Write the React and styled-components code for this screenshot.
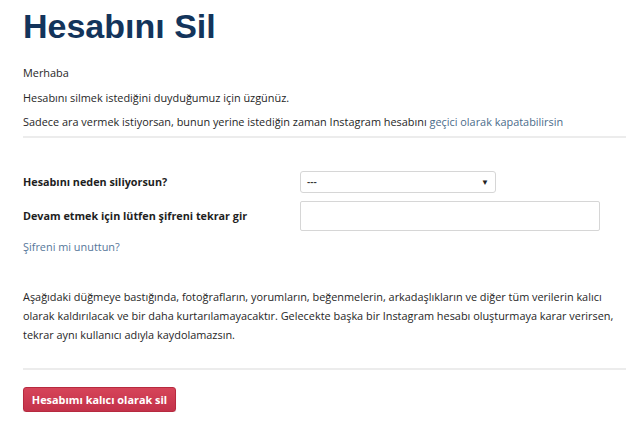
import React from "react";
import styled, { createGlobalStyle } from "styled-components";

const Global = createGlobalStyle`
  html, body { margin: 0; padding: 0; background: #fff; }
  body { font-family: "Open Sans", "Noto Sans", sans-serif; color: #262626; }
`;

const Page = styled.div`
  width: 603px;
  padding: 6px 0 0 23px;
`;

const Title = styled.h1`
  margin: 0;
  font-family: "Liberation Sans", Arial, sans-serif;
  font-weight: 700;
  font-size: 34px;
  line-height: 40px;
  color: #13345b;
`;

const Text = styled.p`
  margin: 0;
  font-size: 10.9px;
  line-height: 24.5px;
`;

const Intro = styled.div`
  padding-top: 15px;
  padding-bottom: 1px;
  border-bottom: 2px solid #ececec;
`;

const Link = styled.a`
  color: #4a6b8a;
  text-decoration: none;
`;

const Form = styled.div`
  padding-top: 33px;
  display: flex;
  flex-direction: column;
  gap: 8px;
`;

const Row = styled.div`
  display: grid;
  grid-template-columns: 277px 1fr;
  align-items: center;
`;

const Label = styled.label`
  font-size: 10.8px;
  font-weight: 700;
  color: #1e1e1e;
`;

const Select = styled.div`
  width: 196px;
  height: 22px;
  box-sizing: border-box;
  border: 1px solid #d6d6d6;
  border-radius: 3px;
  display: flex;
  align-items: center;
  justify-content: space-between;
  padding: 0 6px 0 6px;
  font-size: 10px;
  font-weight: 600;
  color: #333;
`;

const Arrow = styled.span`
  font-size: 8px;
  color: #222;
`;

const Input = styled.div`
  width: 300px;
  height: 30px;
  box-sizing: border-box;
  border: 1px solid #d6d6d6;
  border-radius: 2px;
`;

const Forgot = styled(Link)`
  font-size: 10.9px;
  line-height: 20px;
  color: #56779a;
  margin-top: -2px;
`;

const Warning = styled.p`
  margin: 0;
  padding: 30px 12px 24px 0;
  font-size: 10.9px;
  line-height: 19px;
  border-bottom: 2px solid #ececec;
`;

const Danger = styled.button`
  margin-top: 17px;
  width: 153px;
  height: 25px;
  border: 1px solid #b72a3f;
  border-radius: 3px;
  background: linear-gradient(#d64459, #c3324a);
  color: #fff;
  font-family: "Open Sans", sans-serif;
  font-size: 10.9px;
  font-weight: 700;
  box-shadow: 0 1px 1px rgba(0,0,0,0.15);
`;

export default function App() {
  return (
    <Page>
      <Global />
      <Title>Hesabını Sil</Title>
      <Intro>
        <Text>Merhaba</Text>
        <Text>Hesabını silmek istediğini duyduğumuz için üzgünüz.</Text>
        <Text>
          Sadece ara vermek istiyorsan, bunun yerine istediğin zaman Instagram hesabını{" "}
          <Link href="#">geçici olarak kapatabilirsin</Link>
        </Text>
      </Intro>
      <Form>
        <Row>
          <Label>Hesabını neden siliyorsun?</Label>
          <Select>
            <span>---</span>
            <Arrow>▼</Arrow>
          </Select>
        </Row>
        <Row>
          <Label>Devam etmek için lütfen şifreni tekrar gir</Label>
          <Input />
        </Row>
        <Forgot href="#">Şifreni mi unuttun?</Forgot>
      </Form>
      <Warning>
        Aşağıdaki düğmeye bastığında, fotoğrafların, yorumların, beğenmelerin, arkadaşlıkların ve diğer tüm verilerin kalıcı
        olarak kaldırılacak ve bir daha kurtarılamayacaktır. Gelecekte başka bir Instagram hesabı oluşturmaya karar verirsen,
        tekrar aynı kullanıcı adıyla kaydolamazsın.
      </Warning>
      <Danger>Hesabımı kalıcı olarak sil</Danger>
    </Page>
  );
}
